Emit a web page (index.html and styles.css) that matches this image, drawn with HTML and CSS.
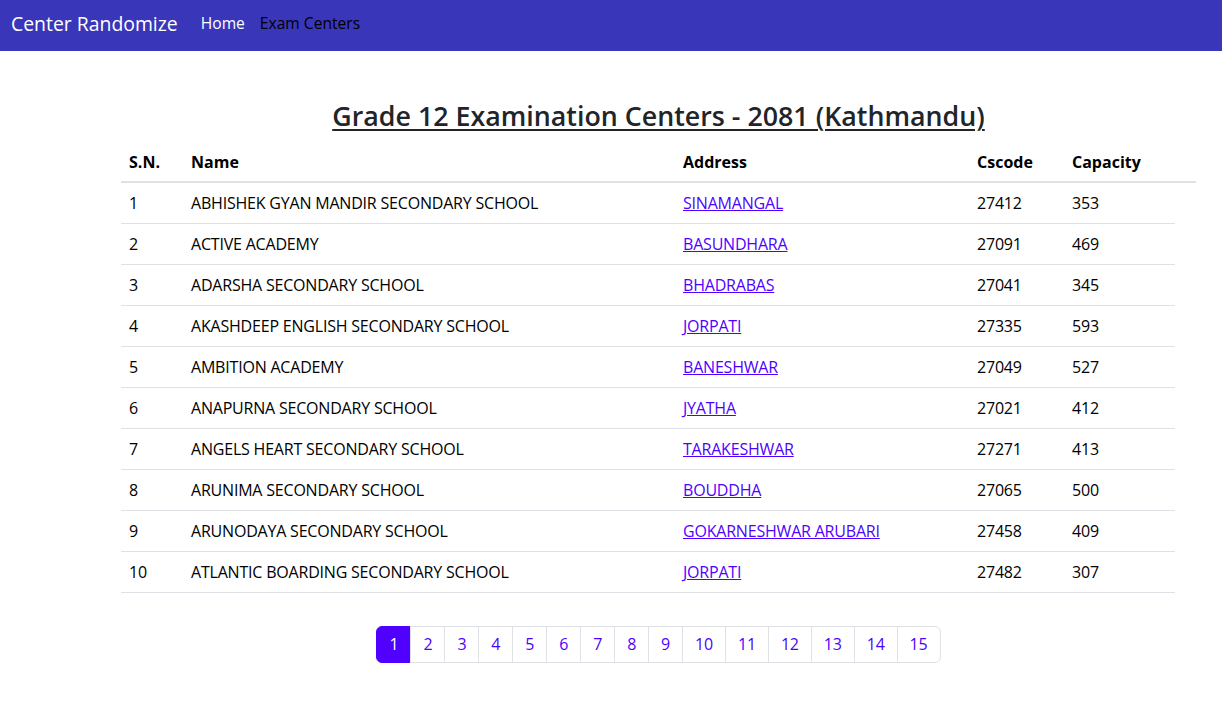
FILE: index.html
```html
<!DOCTYPE html>
<html lang="en">
<head>
<meta charset="utf-8">
<title>Center Randomize</title>
<link rel="stylesheet" href="styles.css">
</head>
<body>
<nav class="navbar">
  <a class="brand" href="#">Center Randomize</a>
  <a class="nav-link" href="#">Home</a>
  <a class="nav-link active" href="#">Exam Centers</a>
</nav>
<main class="content">
  <h1 class="title">Grade 12 Examination Centers - 2081 (Kathmandu)</h1>
  <table class="centers">
    <thead>
      <tr><th class="c-sn">S.N.</th><th class="c-name">Name</th><th class="c-addr">Address</th><th class="c-code">Cscode</th><th class="c-cap">Capacity</th></tr>
    </thead>
    <tbody>
      <tr><td>1</td><td>ABHISHEK GYAN MANDIR SECONDARY SCHOOL</td><td><a href="#">SINAMANGAL</a></td><td>27412</td><td>353</td></tr>
      <tr><td>2</td><td>ACTIVE ACADEMY</td><td><a href="#">BASUNDHARA</a></td><td>27091</td><td>469</td></tr>
      <tr><td>3</td><td>ADARSHA SECONDARY SCHOOL</td><td><a href="#">BHADRABAS</a></td><td>27041</td><td>345</td></tr>
      <tr><td>4</td><td>AKASHDEEP ENGLISH SECONDARY SCHOOL</td><td><a href="#">JORPATI</a></td><td>27335</td><td>593</td></tr>
      <tr><td>5</td><td>AMBITION ACADEMY</td><td><a href="#">BANESHWAR</a></td><td>27049</td><td>527</td></tr>
      <tr><td>6</td><td>ANAPURNA SECONDARY SCHOOL</td><td><a href="#">JYATHA</a></td><td>27021</td><td>412</td></tr>
      <tr><td>7</td><td>ANGELS HEART SECONDARY SCHOOL</td><td><a href="#">TARAKESHWAR</a></td><td>27271</td><td>413</td></tr>
      <tr><td>8</td><td>ARUNIMA SECONDARY SCHOOL</td><td><a href="#">BOUDDHA</a></td><td>27065</td><td>500</td></tr>
      <tr><td>9</td><td>ARUNODAYA SECONDARY SCHOOL</td><td><a href="#">GOKARNESHWAR ARUBARI</a></td><td>27458</td><td>409</td></tr>
      <tr><td>10</td><td>ATLANTIC BOARDING SECONDARY SCHOOL</td><td><a href="#">JORPATI</a></td><td>27482</td><td>307</td></tr>
    </tbody>
  </table>
  <ul class="pagination">
    <li class="page active"><a href="#">1</a></li>
    <li class="page"><a href="#">2</a></li>
    <li class="page"><a href="#">3</a></li>
    <li class="page"><a href="#">4</a></li>
    <li class="page"><a href="#">5</a></li>
    <li class="page"><a href="#">6</a></li>
    <li class="page"><a href="#">7</a></li>
    <li class="page"><a href="#">8</a></li>
    <li class="page"><a href="#">9</a></li>
    <li class="page"><a href="#">10</a></li>
    <li class="page"><a href="#">11</a></li>
    <li class="page"><a href="#">12</a></li>
    <li class="page"><a href="#">13</a></li>
    <li class="page"><a href="#">14</a></li>
    <li class="page"><a href="#">15</a></li>
  </ul>
</main>
</body>
</html>
```

FILE: styles.css
```css
* { box-sizing: border-box; }
html, body { margin: 0; padding: 0; background: #fff; }
body {
  font-family: "Open Sans", "Noto Sans", "Liberation Sans", sans-serif;
  color: #000;
  font-size: 16px;
}
.navbar {
  height: 51px;
  background: #3a36b9;
  display: flex;
  align-items: center;
  padding: 0 11px 5px;
}
.brand {
  color: #fff;
  text-decoration: none;
  font-size: 19.4px;
  margin-right: 23px;
}
.nav-link {
  color: #fff;
  text-decoration: none;
  font-size: 15.6px;
  margin-right: 15px;
}
.nav-link.active { color: #000; }

.content {
  margin-left: 121px;
  width: 1075px;
  padding-top: 49px;
}
.title {
  margin: 0 0 10px;
  text-align: center;
  font-size: 26.8px;
  font-weight: 600;
  color: #212529;
  text-decoration: underline;
  text-decoration-thickness: 2px;
  text-underline-offset: 3px;
  line-height: 32px;
}
.centers {
  width: 100%;
  border-collapse: separate;
  border-spacing: 0;
}
.centers th {
  text-align: left;
  font-weight: 700;
  height: 41px;
  padding: 0 8px;
  border-bottom: 2px solid #dee2e6;
}
.centers td {
  height: 41px;
  padding: 0 8px;
  border-bottom: 1px solid #dee2e6;
  letter-spacing: -0.2px;
}
.centers td:last-child {
  border-bottom-color: transparent;
  background-image: linear-gradient(#dee2e6, #dee2e6);
  background-origin: border-box;
  background-repeat: no-repeat;
  background-position: left bottom;
  background-size: 111px 1px;
}
.c-sn { width: 62px; }
.c-name { width: 492px; }
.c-addr { width: 294px; }
.c-code { width: 95px; }
.centers a { color: #4f00ff; }

.pagination {
  list-style: none;
  display: flex;
  justify-content: center;
  margin: 33px 0 0;
  padding: 0;
}
.page a {
  display: block;
  height: 37px;
  line-height: 35px;
  padding: 0 12px;
  border: 1px solid #dee2e6;
  margin-left: -1px;
  color: #4f00ff;
  text-decoration: none;
  text-align: center;
  background: #fff;
  letter-spacing: -0.2px;
}
.page:first-child a { border-radius: 6px 0 0 6px; margin-left: 0; }
.page:last-child a { border-radius: 0 6px 6px 0; }
.page.active a { background: #4f00ff; border-color: #4f00ff; color: #fff; }
```
